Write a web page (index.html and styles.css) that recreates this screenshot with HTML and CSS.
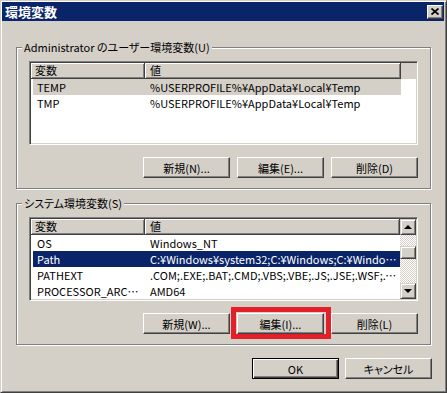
FILE: index.html
```html
<!DOCTYPE html>
<html lang="ja">
<head>
    <meta charset="UTF-8">
    <meta name="viewport" content="width=device-width, initial-scale=1.0">
    <title>環境変数</title>
    <link rel="stylesheet" href="styles.css">
</head>
<body>
    <div class="window">
        <div class="titlebar">
            <span class="title">環境変数</span>
            <button class="close-btn" aria-label="閉じる">
                <svg width="8" height="7" viewBox="0 0 8 7"><path d="M0.5 0.5 L7.5 6.5 M7.5 0.5 L0.5 6.5" stroke="#000" stroke-width="1.7" fill="none"/></svg>
            </button>
        </div>

        <div class="dialog-body">
            <fieldset class="group">
                <legend>Administrator のユーザー環境変数(U)</legend>
                <div class="listview">
                    <div class="lv-main">
                        <div class="lv-header">
                            <div class="col col-name">変数</div>
                            <div class="col col-value">値</div>
                            <div class="col-fill"></div>
                        </div>
                        <div class="lv-row inactive-sel">
                            <span class="cell cell-name">TEMP</span>
                            <span class="cell cell-value">%USERPROFILE%¥AppData¥Local¥Temp</span>
                        </div>
                        <div class="lv-row">
                            <span class="cell cell-name">TMP</span>
                            <span class="cell cell-value">%USERPROFILE%¥AppData¥Local¥Temp</span>
                        </div>
                    </div>
                </div>
                <div class="btn-row">
                    <button class="btn">新規(N)...</button>
                    <button class="btn">編集(E)...</button>
                    <button class="btn">削除(D)</button>
                </div>
            </fieldset>

            <fieldset class="group group-system">
                <legend>システム環境変数(S)</legend>
                <div class="listview">
                    <div class="lv-main">
                        <div class="lv-header">
                            <div class="col col-name">変数</div>
                            <div class="col col-value">値</div>
                        </div>
                        <div class="lv-row">
                            <span class="cell cell-name">OS</span>
                            <span class="cell cell-value">Windows_NT</span>
                        </div>
                        <div class="lv-row selected">
                            <span class="cell cell-name">Path</span>
                            <span class="cell cell-value">C:¥Windows¥system32;C:¥Windows;C:¥Windows¥System32¥Wbem</span>
                        </div>
                        <div class="lv-row">
                            <span class="cell cell-name">PATHEXT</span>
                            <span class="cell cell-value">.COM;.EXE;.BAT;.CMD;.VBS;.VBE;.JS;.JSE;.WSF;.WSH;.MSC</span>
                        </div>
                        <div class="lv-row">
                            <span class="cell cell-name">PROCESSOR_ARCHITECTURE</span>
                            <span class="cell cell-value">AMD64</span>
                        </div>
                    </div>
                    <div class="scrollbar">
                        <div class="sb-btn"><span class="arrow-up"></span></div>
                        <div class="sb-track sb-track-top"></div>
                        <div class="sb-thumb"></div>
                        <div class="sb-track"></div>
                        <div class="sb-btn"><span class="arrow-down"></span></div>
                    </div>
                </div>
                <div class="btn-row">
                    <button class="btn">新規(W)...</button>
                    <button class="btn marked">編集(I)...<span class="highlight"></span></button>
                    <button class="btn">削除(L)</button>
                </div>
            </fieldset>

            <div class="dialog-buttons">
                <button class="btn btn-default">OK</button>
                <button class="btn">キャンセル</button>
            </div>
        </div>
    </div>
</body>
</html>
```

FILE: styles.css
```css
* {
    margin: 0;
    padding: 0;
    box-sizing: border-box;
}

body {
    font-family: "Noto Sans CJK JP", "Liberation Sans", sans-serif;
    font-size: 11px;
    font-feature-settings: "palt";
    color: #000;
    background: #d4d0c8;
}

.window {
    width: 447px;
    height: 393px;
    background: #d4d0c8;
    border: 1px solid;
    border-color: #d4d0c8 #404040 #404040 #d4d0c8;
    box-shadow: inset 1px 1px #fff, inset -1px -1px #808080;
    padding: 1px 2px 2px 1px;
}

/* title bar */
.titlebar {
    height: 19px;
    background: #0a246a;
    display: flex;
    align-items: center;
    justify-content: space-between;
    padding: 0 1px 0 3px;
}

.title {
    color: #fff;
    font-weight: bold;
    font-size: 13px;
    line-height: 19px;
}

.close-btn {
    width: 16px;
    height: 14px;
    display: flex;
    align-items: center;
    justify-content: center;
    background: #d4d0c8;
    border: 1px solid;
    border-color: #fff #404040 #404040 #fff;
    box-shadow: inset -1px -1px #808080;
    padding-bottom: 1px;
}

/* body */
.dialog-body {
    padding: 0 13px 0 14px;
}

.group {
    margin-top: 19px;
    padding: 7px 12px 10px 12px;
    border: 1px solid #808080;
    box-shadow: inset 1px 1px #fff, 1px 1px #fff;
    min-width: 0;
}

.group-system {
    margin-top: 7px;
}

.group legend {
    margin-left: -7px;
    padding: 0 2px;
    line-height: 14px;
    background: #d4d0c8;
}

/* list view */
.listview {
    height: 84px;
    display: flex;
    background: #fff;
    border: 1px solid;
    border-color: #808080 #fff #fff #808080;
    box-shadow: inset 1px 1px #404040, inset -1px -1px #d4d0c8;
    padding: 1px;
}

.lv-main {
    flex: 1;
    min-width: 0;
    overflow: hidden;
}

.lv-header {
    display: flex;
    height: 16px;
    background: #d4d0c8;
}

.col {
    height: 16px;
    line-height: 15px;
    background: #d4d0c8;
    border-right: 1px solid #404040;
    border-bottom: 1px solid #404040;
    box-shadow: inset 1px 1px #fff, inset -1px -1px #808080;
    white-space: nowrap;
}

.col-name {
    width: 114px;
    padding-left: 4px;
}

.col-value {
    width: 256px;
    padding-left: 5px;
}

.group-system .col-value {
    width: 255px;
}

.col-fill {
    flex: 1;
}

.lv-row {
    display: flex;
    width: 368px;
    height: 16px;
    margin-left: 2px;
    line-height: 16px;
    white-space: nowrap;
}

.cell {
    overflow: hidden;
    text-overflow: ellipsis;
}

.cell-name {
    width: 112px;
    padding: 0 4px;
}

.cell-value {
    width: 256px;
    padding: 0 4px 0 5px;
}

.lv-row.inactive-sel {
    background: #d4d0c8;
}

.lv-row.selected {
    background: #0a246a;
    color: #fff;
}

/* scroll bar */
.scrollbar {
    width: 16px;
    display: flex;
    flex-direction: column;
}

.sb-btn,
.sb-thumb {
    background: #d4d0c8;
    border: 1px solid;
    border-color: #d4d0c8 #404040 #404040 #d4d0c8;
    box-shadow: inset 1px 1px #fff, inset -1px -1px #808080;
}

.sb-btn {
    height: 16px;
    display: flex;
    align-items: center;
    justify-content: center;
}

.sb-thumb {
    height: 13px;
}

.sb-track {
    flex: 1;
    background: repeating-conic-gradient(#d4d0c8 0 25%, #fff 0 50%) 0 0 / 2px 2px;
}

.sb-track-top {
    flex: none;
    height: 11px;
}

.arrow-up,
.arrow-down {
    width: 0;
    height: 0;
    border-left: 4px solid transparent;
    border-right: 4px solid transparent;
}

.arrow-up {
    border-bottom: 4px solid #000;
}

.arrow-down {
    border-top: 4px solid #000;
}

/* buttons */
.btn-row {
    display: flex;
    justify-content: flex-end;
    gap: 7px;
    margin-top: 12px;
}

.btn {
    position: relative;
    width: 87px;
    height: 21px;
    font: inherit;
    line-height: 18px;
    color: #000;
    background: #d4d0c8;
    border: 1px solid;
    border-color: #fff #404040 #404040 #fff;
    box-shadow: inset -1px -1px #808080;
}

.btn-default {
    border-color: #000;
    box-shadow: inset 1px 1px #fff, inset -1px -1px #404040, inset -2px -2px #808080;
}

.dialog-buttons {
    display: flex;
    justify-content: flex-end;
    gap: 6px;
    margin-top: 13px;
    margin-right: -1px;
}

/* red annotation box */
.highlight {
    position: absolute;
    top: -7px;
    left: -7px;
    right: -8px;
    bottom: -6px;
    border: 5px solid #e3202a;
}
```
